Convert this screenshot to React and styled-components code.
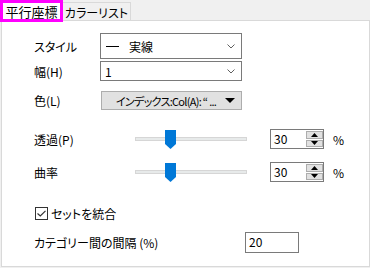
import React from 'react'
import styled, { createGlobalStyle } from 'styled-components'

const Global = createGlobalStyle`
  html, body { margin: 0; padding: 0; }
  body {
    background: #f0f0f0;
    font-family: "Noto Sans CJK JP", "Noto Sans", sans-serif;
    font-size: 12px;
    color: #000;
    font-feature-settings: "palt";
  }
`

const Window = styled.div`
  width: 370px;
  height: 268px;
  overflow: hidden;
  background: #f0f0f0;
`

const TabBar = styled.div`
  display: flex;
  align-items: flex-end;
  height: 20px;
  position: relative;
  z-index: 1;
`

const Tab = styled.div`
  box-sizing: border-box;
  display: flex;
  align-items: center;
  justify-content: center;
  white-space: nowrap;
  ${(p) => p.$active ? `
    width: 63px;
    height: 22px;
    align-self: flex-start;
    margin-bottom: -2px;
    border: 3px solid #ff00ff;
    background: #fff;
    padding-top: 1px;
    font-size: 13px;
  ` : `
    width: 68px;
    height: 18px;
    border: 1px solid #d9d9d9;
    border-bottom: none;
    border-left: none;
    background: #f0f0f0;
    padding-top: 1px;
  `}
`

const Panel = styled.div`
  box-sizing: border-box;
  margin-left: 1px;
  width: 369px;
  height: 247px;
  background: #fff;
  border: 1px solid #d9d9d9;
  padding: 12px 0 0 32px;
`

const Row = styled.div`
  display: flex;
  align-items: center;
  height: ${(p) => p.$h}px;
  margin-top: ${(p) => p.$mt || 0}px;
`

const Label = styled.div`
  width: ${(p) => p.$w || 66}px;
  flex: none;
  white-space: nowrap;
`

const Combo = styled.div`
  box-sizing: border-box;
  width: 142px;
  height: ${(p) => p.$h}px;
  border: 1px solid #7a7a7a;
  background: #fff;
  display: flex;
  align-items: center;
  padding: 0 6px 0 4px;
`

const ComboText = styled.div`
  flex: 1;
  display: flex;
  align-items: center;
  gap: 10px;
`

const LineSample = styled.span`
  width: 13px;
  height: 1px;
  background: #000;
  margin-left: 1px;
`

const ColorButton = styled.div`
  box-sizing: border-box;
  width: 141px;
  height: 19px;
  margin-left: 1px;
  background: #e1e1e1;
  border: 1px solid #adadad;
  display: flex;
  align-items: center;
  padding: 0 6px 0 14px;
  font-size: 11px;
  letter-spacing: -0.7px;
  white-space: nowrap;
`

const ColorText = styled.span`
  flex: 1;
  overflow: hidden;
`

const Track = styled.div`
  position: relative;
  width: 112px;
  height: 4px;
  box-sizing: border-box;
  background: #e7eaea;
  border: 1px solid #d6d6d6;
  margin-right: 23px;
`

const Thumb = styled.svg`
  position: absolute;
  top: -8px;
`

const Spin = styled.div`
  box-sizing: border-box;
  width: 54px;
  height: 20px;
  border: 1px solid #7a7a7a;
  display: flex;
  background: #fff;
`

const SpinValue = styled.div`
  flex: 1;
  padding-left: 3px;
  line-height: 17px;
`

const SpinButtons = styled.div`
  width: 17px;
  display: flex;
  flex-direction: column;
  gap: 1px;
  padding: 1px 0;
`

const SpinBtn = styled.div`
  flex: 1;
  box-sizing: border-box;
  background: #e1e1e1;
  border: 1px solid #adadad;
  display: flex;
  align-items: center;
  justify-content: center;
`

const Unit = styled.span`
  margin-left: 9px;
`

const CheckBox = styled.div`
  box-sizing: border-box;
  width: 13px;
  height: 13px;
  border: 1px solid #333;
  background: #fff;
  display: flex;
  align-items: center;
  justify-content: center;
  margin: 0 3px 0 1px;
`

const TextBox = styled.div`
  box-sizing: border-box;
  width: 54px;
  height: 21px;
  border: 1px solid #7a7a7a;
  padding-left: 3px;
  line-height: 18px;
`

const Chevron = () => (
  <svg width="8" height="5" viewBox="0 0 8 5">
    <path d="M0.5 0.5 L4 4 L7.5 0.5" fill="none" stroke="#606060" strokeWidth="1" />
  </svg>
)

const SliderRow = ({ label, value, mt }) => (
  <Row $h={20} $mt={mt}>
    <Label $w={101}>{label}</Label>
    <Track>
      <Thumb width="11" height="19" viewBox="0 0 11 19" style={{ left: `${Math.round(value / 100 * 101) - 1}px` }}>
        <path d="M0 0 H11 V14 L5.5 19 L0 14 Z" fill="#0078d7" />
      </Thumb>
    </Track>
    <Spin>
      <SpinValue>{value}</SpinValue>
      <SpinButtons>
        <SpinBtn>
          <svg width="7" height="4" viewBox="0 0 7 4"><path d="M3.5 0 L7 4 H0 Z" fill="#000" /></svg>
        </SpinBtn>
        <SpinBtn>
          <svg width="7" height="4" viewBox="0 0 7 4"><path d="M0 0 H7 L3.5 4 Z" fill="#000" /></svg>
        </SpinBtn>
      </SpinButtons>
    </Spin>
    <Unit>%</Unit>
  </Row>
)

export default function App() {
  return (
    <Window>
      <Global />
      <TabBar>
        <Tab $active>平行座標</Tab>
        <Tab>カラーリスト</Tab>
      </TabBar>
      <Panel>
        <Row $h={26}>
          <Label>スタイル</Label>
          <Combo $h={26}>
            <ComboText><LineSample />実線</ComboText>
            <Chevron />
          </Combo>
        </Row>
        <Row $h={20} $mt={2}>
          <Label>幅(H)</Label>
          <Combo $h={20}>
            <ComboText>1</ComboText>
            <Chevron />
          </Combo>
        </Row>
        <Row $h={19} $mt={10}>
          <Label>色(L)</Label>
          <ColorButton>
            <ColorText>インデックス:Col(A): “ ...</ColorText>
            <svg width="10" height="5" viewBox="0 0 10 5"><path d="M0 0 H10 L5 5 Z" fill="#000" /></svg>
          </ColorButton>
        </Row>
        <SliderRow label="透過(P)" value={30} mt={19} />
        <SliderRow label="曲率" value={30} mt={13} />
        <Row $h={13} $mt={25}>
          <CheckBox>
            <svg width="9" height="7" viewBox="0 0 9 7"><path d="M0.5 3.5 L3.3 6 L8.5 0.8" fill="none" stroke="#333" strokeWidth="1.2" /></svg>
          </CheckBox>
          <span>セットを統合</span>
        </Row>
        <Row $h={21} $mt={12}>
          <Label $w={211}>カテゴリー間の間隔 (%)</Label>
          <TextBox>20</TextBox>
        </Row>
      </Panel>
    </Window>
  )
}
